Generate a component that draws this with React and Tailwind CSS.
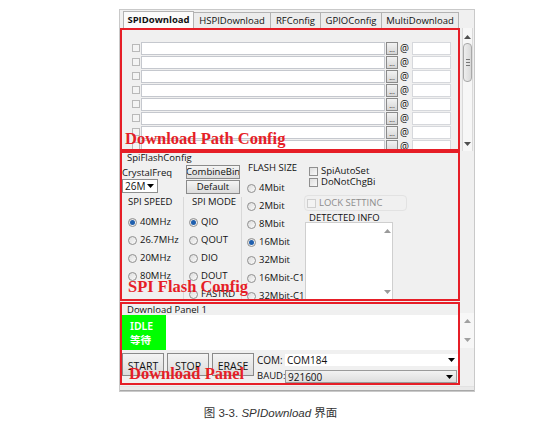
import React from 'react'

const TABS = ['SPIDownload', 'HSPIDownload', 'RFConfig', 'GPIOConfig', 'MultiDownload']
const TAB_W = [71, 78, 51, 62, 78]

function Radio({ label, checked }) {
  return (
    <div className="flex h-[18px] items-center whitespace-nowrap">
      <span className="flex h-[9px] w-[9px] shrink-0 items-center justify-center rounded-full border border-[#8f8f8f] bg-gradient-to-br from-[#dcdcdc] to-[#fbfbfb]">
        {checked && <span className="h-[5px] w-[5px] rounded-full bg-[#1f5fae]" />}
      </span>
      <span className="ml-[3px]">{label}</span>
    </div>
  )
}

function Check({ gray }) {
  return (
    <span
      className={`inline-block h-[9px] w-[9px] shrink-0 border ${
        gray ? 'border-[#cfcfcf] bg-[#f3f3f3]' : 'border-[#8f8f8f] bg-gradient-to-br from-[#dedede] to-[#f8f8f8]'
      }`}
    />
  )
}

function Arrow({ up, className = '' }) {
  return (
    <svg width="7" height="4" viewBox="0 0 7 4" className={className}>
      <path d={up ? 'M0 4 L3.5 0 L7 4 Z' : 'M0 0 L7 0 L3.5 4 Z'} fill="currentColor" />
    </svg>
  )
}

function PathRow() {
  return (
    <div className="flex h-[14px] shrink-0 items-center">
      <span className="ml-[10px] h-[8px] w-[8px] border border-[#b9b9b9] bg-[#f4f4f4]" />
      <span className="ml-[1px] h-[13px] w-[244px] border border-[#c5c8ce] bg-white" />
      <span className="ml-[1px] flex h-[13px] w-[12px] items-end justify-center border border-[#8a8a8a] bg-gradient-to-b from-[#f2f2f2] to-[#d6d6d6] pb-[1px] text-[7px] leading-[7px]">
        ...
      </span>
      <span className="ml-[2px] w-[8px] text-[10px] leading-[10px]">@</span>
      <span className="ml-[4px] h-[13px] w-[39px] border border-[#d6d8dc] bg-white" />
    </div>
  )
}

function Button({ children, className = '' }) {
  return (
    <div
      className={`flex items-center justify-center border border-[#8a8a8a] bg-gradient-to-b from-[#f4f4f4] to-[#dcdcdc] ${className}`}
    >
      {children}
    </div>
  )
}

export default function App() {
  return (
    <div className="h-[424px] w-[541px] overflow-hidden bg-white font-['Open_Sans','Noto_Sans',sans-serif] text-[9.5px] leading-[10px] text-[#111]">
      <div className="ml-[119px] mt-[9px] flex h-[383px] w-[356px] flex-col border border-[#c9c9c9] bg-[#f0f0f0]">
        {/* tabs */}
        <div className="flex h-[18px] shrink-0 items-end pl-[3px]">
          {TABS.map((t, i) => (
            <div
              key={t}
              style={{ width: TAB_W[i] }}
              className={`flex items-center justify-center border border-b-0 border-[#b3b3b3] ${
                i === 0 ? 'h-[17px] bg-[#fbfbfb] font-bold' : 'h-[16px] -ml-px bg-[#ececec]'
              }`}
            >
              {t}
            </div>
          ))}
        </div>

        {/* download path config */}
        <div className="flex h-[123px] shrink-0">
          <div className="relative flex w-[340px] flex-col overflow-hidden border-2 border-[#e61e27] pt-[11px]">
            {Array.from({ length: 8 }).map((_, i) => (
              <PathRow key={i} />
            ))}
            <div className="absolute left-[3px] top-[100px] font-['Liberation_Serif',serif] text-[16.5px] font-bold leading-[17px] text-[#e61e27]">
              Download Path Config
            </div>
          </div>
          <div className="ml-[2px] flex w-[11px] flex-col items-center border-x border-[#dadada] bg-[#f7f7f7] text-[#505050]">
            <Arrow up className="mt-[7px]" />
            <div className="mt-[4px] flex h-[39px] w-[9px] flex-col items-center justify-center gap-[2px] rounded-sm border border-[#a9a9a9] bg-gradient-to-r from-[#eeeeee] to-[#d9d9d9]">
              <span className="h-px w-[4px] bg-[#777]" />
              <span className="h-px w-[4px] bg-[#777]" />
              <span className="h-px w-[4px] bg-[#777]" />
            </div>
            <div className="flex-1" />
            <Arrow className="mb-[5px]" />
          </div>
        </div>

        {/* spi flash config */}
        <div className="flex h-[150px] shrink-0">
          <div className="relative w-[340px] overflow-hidden border-2 border-[#e61e27]">
            <div className="pl-[5px]">SpiFlashConfig</div>
            <div className="flex">
              {/* crystal + speed */}
              <div className="flex w-[62px] flex-col">
                <div className="mt-[5px] h-[10px] overflow-hidden">CrystalFreq</div>
                <div className="mt-[1px] flex h-[14px] w-[36px] items-center justify-between border border-[#8f8f8f] bg-white pl-[2px] pr-[3px] text-[10px]">
                  <span>26M</span>
                  <Arrow className="text-black" />
                </div>
                <div className="ml-[2px] mt-[4px] h-[120px] border-r border-[#d8d8d8] pl-[4px]">
                  <div>SPI SPEED</div>
                  <div className="mt-[6px]">
                    <Radio label="40MHz" checked />
                    <Radio label="26.7MHz" />
                    <Radio label="20MHz" />
                    <Radio label="80MHz" />
                  </div>
                </div>
              </div>
              {/* combine + mode */}
              <div className="ml-[2px] flex w-[56px] flex-col">
                <Button className="mt-[2px] h-[14px] w-[54px] overflow-hidden whitespace-nowrap">CombineBin</Button>
                <Button className="mt-[1px] h-[14px] w-[54px]">Default</Button>
                <div className="mt-[3px] h-[120px] border-r border-[#d8d8d8] pl-[3px]">
                  <div className="pl-[3px]">SPI MODE</div>
                  <div className="mt-[6px]">
                    <Radio label="QIO" checked />
                    <Radio label="QOUT" />
                    <Radio label="DIO" />
                    <Radio label="DOUT" />
                    <Radio label="FASTRD" />
                  </div>
                </div>
              </div>
              {/* flash size */}
              <div className="ml-[5px] flex w-[56px] flex-col">
                <div className="ml-[1px]">FLASH SIZE</div>
                <div className="mt-[6px]">
                  <Radio label="4Mbit" />
                  <Radio label="2Mbit" />
                  <Radio label="8Mbit" />
                  <Radio label="16Mbit" checked />
                  <Radio label="32Mbit" />
                  <Radio label="16Mbit-C1" />
                  <Radio label="32Mbit-C1" />
                </div>
              </div>
              {/* auto set + detected */}
              <div className="ml-[1px] flex w-[104px] flex-col">
                <div className="ml-[5px] mt-[3px] flex items-center gap-[3px]">
                  <Check /> SpiAutoSet
                </div>
                <div className="ml-[5px] mt-[1px] flex items-center gap-[3px] whitespace-nowrap">
                  <Check /> DoNotChgBi
                </div>
                <div className="mt-[8px] flex h-[16px] w-[103px] items-center gap-[3px] rounded-sm border border-[#e2e2e2] pl-[2px] text-[#8d8d8d]">
                  <Check gray /> LOCK SETTINC
                </div>
                <div className="ml-[5px] mt-[2px] h-[9px] overflow-hidden">DETECTED INFO</div>
                <div className="ml-[1px] flex h-[79px] w-[88px] border border-[#cfcfcf] bg-white">
                  <div className="flex-1" />
                  <div className="flex w-[10px] flex-col items-center justify-between py-[6px] text-[#9a9a9a]">
                    <Arrow up />
                    <Arrow />
                  </div>
                </div>
              </div>
            </div>
            <div className="absolute left-[6px] top-[125px] font-['Liberation_Serif',serif] text-[16.5px] font-bold leading-[17px] text-[#e61e27]">
              SPI Flash Config
            </div>
          </div>
          <div className="w-[14px]" />
        </div>

        {/* download panel */}
        <div className="mt-[1px] flex h-[83px] shrink-0">
          <div className="relative flex w-[340px] flex-col overflow-hidden border-2 border-[#e61e27]">
            <div className="h-[11px] pl-[5px] pt-[1px]">Download Panel 1</div>
            <div className="flex h-[35px] bg-white">
              <div className="flex w-[44px] flex-col justify-center bg-[#00ff00] pl-[8px] font-['Noto_Sans','Noto_Sans_CJK_SC',sans-serif] text-[10.5px] font-semibold leading-[14px] text-white">
                <span>IDLE</span>
                <span>等待</span>
              </div>
            </div>
            <div className="mt-[3px] flex">
              <Button className="h-[23px] w-[42px] pt-[3px] text-[10.5px]">START</Button>
              <Button className="ml-[3px] h-[23px] w-[42px] pt-[3px] text-[10.5px]">STOP</Button>
              <Button className="ml-[3px] h-[23px] w-[42px] pt-[3px] text-[10.5px]">ERASE</Button>
              <div className="ml-[3px] flex flex-1 flex-col text-[10px]">
                <div className="flex h-[14px] items-center">
                  <span className="w-[28px] shrink-0">COM:</span>
                  <div className="flex h-[12px] flex-1 items-center justify-between bg-white pl-[2px] pr-[3px]">
                    COM184 <Arrow className="text-black" />
                  </div>
                </div>
                <div className="mt-[2px] flex h-[14px] items-center">
                  <span className="w-[28px] shrink-0 whitespace-nowrap text-[9.5px]">BAUD:</span>
                  <div className="flex h-[13px] w-[172px] items-end justify-between overflow-hidden border border-[#9a9a9a] bg-gradient-to-b from-[#f2f2f2] to-[#dedede] pl-[2px] pr-[3px]">
                    <span className="leading-[9px]">921600</span>
                    <Arrow className="mb-[3px] text-black" />
                  </div>
                </div>
              </div>
            </div>
            <div className="absolute left-[7px] top-[61px] font-['Liberation_Serif',serif] text-[16.5px] font-bold leading-[17px] text-[#e61e27]">
              Download Panel
            </div>
          </div>
          <div className="flex w-[14px] flex-col">
            <div className="mt-[11px] flex h-[35px] flex-col items-center justify-between bg-[#f7f7f7] py-[6px] text-[#a0a0a0]">
              <Arrow up />
              <Arrow />
            </div>
          </div>
        </div>

        <div className="mt-[1px] flex-1 border-t border-b border-t-[#e2e2e2] border-b-[#a8a8a8] bg-[#e9e9e9]" />
      </div>

      <div className="mt-[14px] text-center font-['Liberation_Sans','Noto_Sans_CJK_SC',sans-serif] text-[11.5px] leading-[14px] text-[#333]">
        图 3-3. <span className="italic">SPIDownload</span> 界面
      </div>
    </div>
  )
}
